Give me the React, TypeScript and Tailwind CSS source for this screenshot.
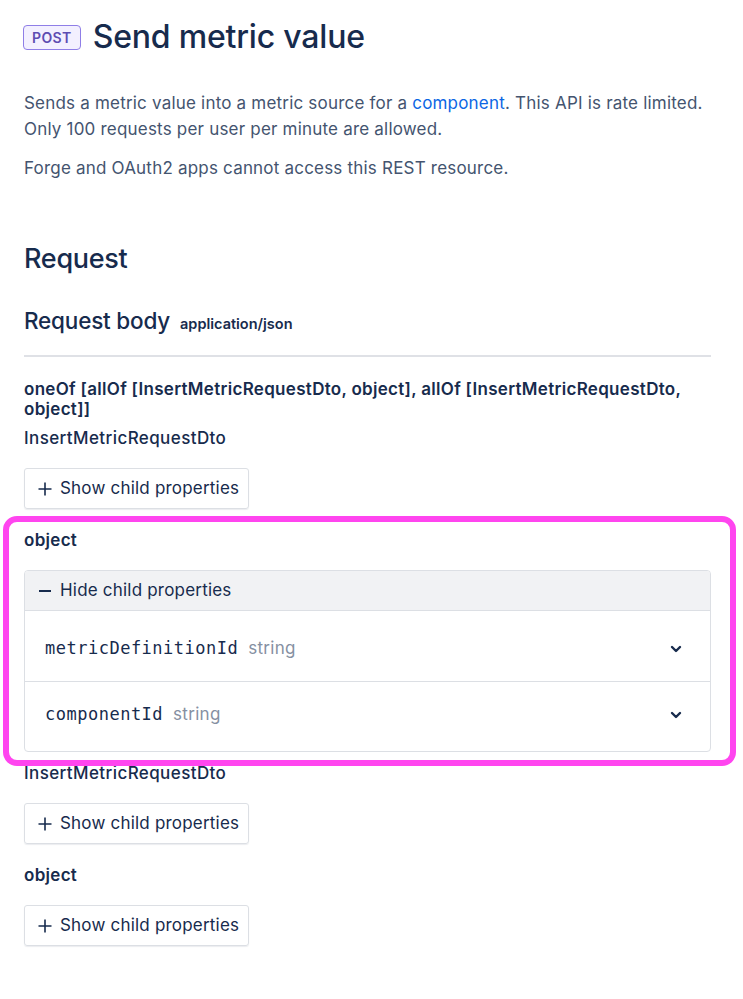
import React from "react";

function PlusIcon() {
  return (
    <svg width="16" height="16" viewBox="0 0 16 16" className="text-[#172b4d]">
      <path d="M8 1.5v13M1.5 8h13" stroke="currentColor" strokeWidth="1.6" fill="none" />
    </svg>
  );
}

function MinusIcon() {
  return (
    <svg width="16" height="16" viewBox="0 0 16 16" className="text-[#172b4d]">
      <path d="M2 8h12" stroke="currentColor" strokeWidth="1.8" fill="none" />
    </svg>
  );
}

function Chevron() {
  return (
    <svg width="12" height="12" viewBox="0 0 12 12" className="text-[#172b4d]">
      <path d="M2 4l4 4 4-4" stroke="currentColor" strokeWidth="2.4" fill="none" strokeLinecap="round" strokeLinejoin="round" />
    </svg>
  );
}

function ShowButton() {
  return (
    <button className="mt-5 flex h-[41px] w-[225px] items-center gap-[7px] rounded-[3px] border border-[#dcdfe4] pl-3 pt-px text-[17px] tracking-[0.2px] text-[#172b4d] shadow-[0_1px_1px_rgba(9,30,66,0.08)]">
      <PlusIcon />
      <span>Show child properties</span>
    </button>
  );
}

function PropRow({ name, last }: { name: string; last?: boolean }) {
  return (
    <div className={"flex items-center justify-between pl-5 pr-7 " + (last ? "h-[69px] pb-[3px]" : "h-[71px] border-b border-[#dcdfe4] pt-[6px]")}>
      <div className="flex items-baseline gap-[10px]">
        <span className="font-['DejaVu_Sans_Mono',monospace] text-[17px] font-medium tracking-[0.5px] text-[#172b4d]">{name}</span>
        <span className="text-[17px] tracking-[0.3px] text-[#8590a2]">string</span>
      </div>
      <Chevron />
    </div>
  );
}

export default function App() {
  return (
    <div className="min-h-[999px] bg-white pl-6 pr-8 pt-[18px] font-['Inter',sans-serif] text-[#172b4d]">
      {/* title */}
      <div className="flex h-[38px] items-center gap-3">
        <span className="-ml-px flex h-[25px] items-center rounded-[4px] border border-[#8f7ee7] bg-[#f3f0ff] px-[8px] text-[14px] font-semibold tracking-[0.4px] text-[#5e4db2]">
          POST
        </span>
        <h1 className="text-[32px] font-medium tracking-[-0.2px]">Send metric value</h1>
      </div>

      {/* description */}
      <p className="mt-[34px] text-[17px] leading-[26px] tracking-[0.2px] text-[#44546f]">
        Sends a metric value into a metric source for a <span className="text-[#0c66e4]">component</span>. This API is rate limited. Only 100 requests per user per minute are allowed.
      </p>
      <p className="mt-[13px] text-[17px] leading-[26px] tracking-[0.2px] text-[#44546f]">Forge and OAuth2 apps cannot access this REST resource.</p>

      <h2 className="mt-[62px] text-[27px] font-medium leading-[32px] tracking-[-0.3px]">Request</h2>

      <div className="mt-8 flex items-baseline gap-[10px]">
        <h3 className="text-[22.5px] font-medium leading-[28px] tracking-[-0.2px]">Request body</h3>
        <span className="text-[14.5px] font-semibold">application/json</span>
      </div>

      <div className="mt-5 h-[2px] bg-[#dfe1e6]" />

      <div className="mt-[22px] text-[17px] font-semibold leading-[20px] tracking-[0.3px]">
        oneOf [allOf [InsertMetricRequestDto, object], allOf [InsertMetricRequestDto, object]]
      </div>

      <div className="mt-[9px] text-[17px] font-medium leading-[20px] tracking-[0.4px]">InsertMetricRequestDto</div>
      <ShowButton />

      {/* highlighted object section */}
      <div className="relative mt-[21px]">
        <div className="text-[17px] font-semibold leading-[20px] tracking-[0.3px]">object</div>
        <div className="mt-5 overflow-hidden rounded-[4px] border border-[#dcdfe4]">
          <div className="flex h-[40px] items-center gap-[7px] border-b border-[#dcdfe4] bg-[#f1f2f4] pl-3 pt-px text-[17px] tracking-[0.2px]">
            <MinusIcon />
            <span>Hide child properties</span>
          </div>
          <PropRow name="metricDefinitionId" />
          <PropRow name="componentId" last />
        </div>
        <div className="pointer-events-none absolute -bottom-[14px] -left-[21px] -right-[25px] -top-[14px] rounded-[14px] border-[6px] border-[#ff45ef]" />
      </div>

      <div className="mt-[11px] text-[17px] font-medium leading-[20px] tracking-[0.4px]">InsertMetricRequestDto</div>
      <ShowButton />

      <div className="mt-[21px] text-[17px] font-semibold leading-[20px] tracking-[0.3px]">object</div>
      <ShowButton />
    </div>
  );
}
